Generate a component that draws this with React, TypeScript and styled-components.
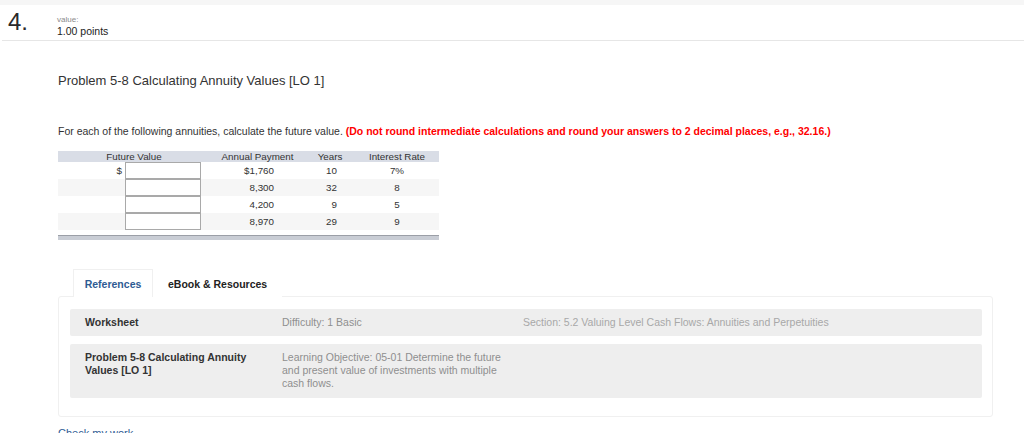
import styled, { createGlobalStyle } from 'styled-components';

const GlobalStyle = createGlobalStyle`
  body {
    margin: 0;
    background: #fff;
    font-family: "Liberation Sans", Arial, sans-serif;
    color: #333;
  }
`;

const TopStrip = styled.div`
  height: 5px;
  background: #f6f6f6;
`;

const QuestionHeader = styled.div`
  display: flex;
  align-items: flex-start;
  height: 35px;
  margin-left: 2px;
  border-bottom: 1px solid #e6e6e6;
`;

const QuestionNumber = styled.div`
  width: 55px;
  padding: 5px 0 0 6px;
  font-size: 24px;
  line-height: 24px;
  color: #2a2a2a;
  box-sizing: border-box;
`;

const ValueBlock = styled.div`
  padding-top: 10px;
`;

const ValueLabel = styled.div`
  font-size: 8px;
  line-height: 9px;
  color: #8a8a8a;
`;

const Points = styled.div`
  font-size: 10.5px;
  line-height: 14px;
  color: #222;
`;

const Content = styled.div`
  padding: 0 31px 0 58px;
`;

const Title = styled.h2`
  margin: 32px 0 0;
  font-size: 13px;
  line-height: 16px;
  font-weight: normal;
  color: #333;
`;

const Instructions = styled.p`
  margin: 36px 0 0;
  font-size: 10.5px;
  line-height: 13px;
  color: #333;
`;

const Warning = styled.strong`
  color: #f00;
`;

const DataTable = styled.table`
  margin-top: 13px;
  width: 381px;
  border-collapse: collapse;
  font-size: 9.8px;
  color: #333;
  table-layout: fixed;
`;

const HeadCell = styled.th`
  background: #d9dde6;
  font-weight: normal;
  height: 11px;
  padding: 0;
  line-height: 11px;
  text-align: center;
`;

const Row = styled.tr<{ $shade?: boolean }>`
  background: ${(p) => (p.$shade ? '#f6f6f6' : '#fff')};
  height: 17px;
`;

const Cell = styled.td<{ $align?: string; $pr?: number }>`
  padding: 0 ${(p) => p.$pr ?? 0}px 0 0;
  text-align: ${(p) => p.$align ?? 'center'};
  line-height: 17px;
  vertical-align: middle;
`;

const AnswerInput = styled.input`
  display: block;
  width: 76px;
  height: 17px;
  box-sizing: border-box;
  margin: 0;
  border: 1px solid #a9a9a9;
  background: #fff;
  padding: 0 2px;
`;

const TableFooter = styled.div`
  width: 381px;
  height: 4px;
  margin-top: 5px;
  background: #c9cdd5;
  border-top: 1.5px solid #9b9fa7;
`;

const Tabs = styled.div`
  display: flex;
  margin: 29px 0 0 15px;
  position: relative;
  z-index: 1;
`;

const Tab = styled.div<{ $active?: boolean }>`
  height: 28px;
  padding: 0 14px;
  display: flex;
  align-items: center;
  justify-content: center;
  font-size: 10.5px;
  font-weight: bold;
  box-sizing: border-box;
  color: ${(p) => (p.$active ? '#2e5b93' : '#222')};
  background: #fff;
  border: 1px solid ${(p) => (p.$active ? '#f0f0f0' : 'transparent')};
  border-bottom: none;
  width: ${(p) => (p.$active ? '80px' : 'auto')};
`;

const Panel = styled.div`
  margin-top: -1px;
  border: 1px solid #f0f0f0;
  border-radius: 3px;
  padding: 12px 10px 18px 11px;
  display: flex;
  flex-direction: column;
  gap: 8px;
`;

const InfoRow = styled.div<{ $tall?: boolean }>`
  display: grid;
  grid-template-columns: 197px 241px 1fr;
  align-items: ${(p) => (p.$tall ? 'start' : 'center')};
  min-height: ${(p) => (p.$tall ? '54px' : '27px')};
  box-sizing: border-box;
  padding: ${(p) => (p.$tall ? '7px 15px' : '0 15px')};
  background: #eeeeee;
  border-radius: 2px;
  font-size: 10.5px;
  line-height: 12.8px;
`;

const RowTitle = styled.div`
  font-weight: bold;
  color: #333;
  padding-right: 20px;
`;

const Meta = styled.div<{ $light?: boolean }>`
  color: ${(p) => (p.$light ? '#a8a8a8' : '#8f8f8f')};
  padding-right: 16px;
`;

const CheckLink = styled.a`
  display: inline-block;
  margin-top: 10px;
  font-size: 11px;
  color: #2e5b93;
  text-decoration: none;
`;

const rows = [
  { pay: '$1,760', years: '10', rate: '7%', dollar: true },
  { pay: '8,300', years: '32', rate: '8' },
  { pay: '4,200', years: '9', rate: '5' },
  { pay: '8,970', years: '29', rate: '9' },
];

export default function App() {
  return (
    <>
      <GlobalStyle />
      <TopStrip />
      <QuestionHeader>
        <QuestionNumber>4.</QuestionNumber>
        <ValueBlock>
          <ValueLabel>value:</ValueLabel>
          <Points>1.00 points</Points>
        </ValueBlock>
      </QuestionHeader>
      <Content>
        <Title>Problem 5-8 Calculating Annuity Values [LO 1]</Title>
        <Instructions>
          For each of the following annuities, calculate the future value.{' '}
          <Warning>
            (Do not round intermediate calculations and round your answers to 2 decimal places, e.g., 32.16.)
          </Warning>
        </Instructions>
        <DataTable>
          <colgroup>
            <col style={{ width: 67 }} />
            <col style={{ width: 85 }} />
            <col style={{ width: 95 }} />
            <col style={{ width: 50 }} />
            <col style={{ width: 84 }} />
          </colgroup>
          <thead>
            <tr>
              <HeadCell colSpan={2}>Future Value</HeadCell>
              <HeadCell>Annual Payment</HeadCell>
              <HeadCell>Years</HeadCell>
              <HeadCell>Interest Rate</HeadCell>
            </tr>
          </thead>
          <tbody>
            {rows.map((r, i) => (
              <Row key={i} $shade={i % 2 === 1}>
                <Cell $align="right" $pr={3}>{r.dollar ? '$' : ''}</Cell>
                <Cell $align="left">
                  <AnswerInput type="text" />
                </Cell>
                <Cell $align="right" $pr={31}>{r.pay}</Cell>
                <Cell $align="right" $pr={18}>{r.years}</Cell>
                <Cell>{r.rate}</Cell>
              </Row>
            ))}
          </tbody>
        </DataTable>
        <TableFooter />
        <Tabs>
          <Tab $active>References</Tab>
          <Tab>eBook &amp; Resources</Tab>
        </Tabs>
        <Panel>
          <InfoRow>
            <RowTitle>Worksheet</RowTitle>
            <Meta>Difficulty: 1 Basic</Meta>
            <Meta $light>Section: 5.2 Valuing Level Cash Flows: Annuities and Perpetuities</Meta>
          </InfoRow>
          <InfoRow $tall>
            <RowTitle>Problem 5-8 Calculating Annuity Values [LO 1]</RowTitle>
            <Meta>Learning Objective: 05-01 Determine the future and present value of investments with multiple cash flows.</Meta>
            <Meta $light />
          </InfoRow>
        </Panel>
        <CheckLink href="#">Check my work</CheckLink>
      </Content>
    </>
  );
}
